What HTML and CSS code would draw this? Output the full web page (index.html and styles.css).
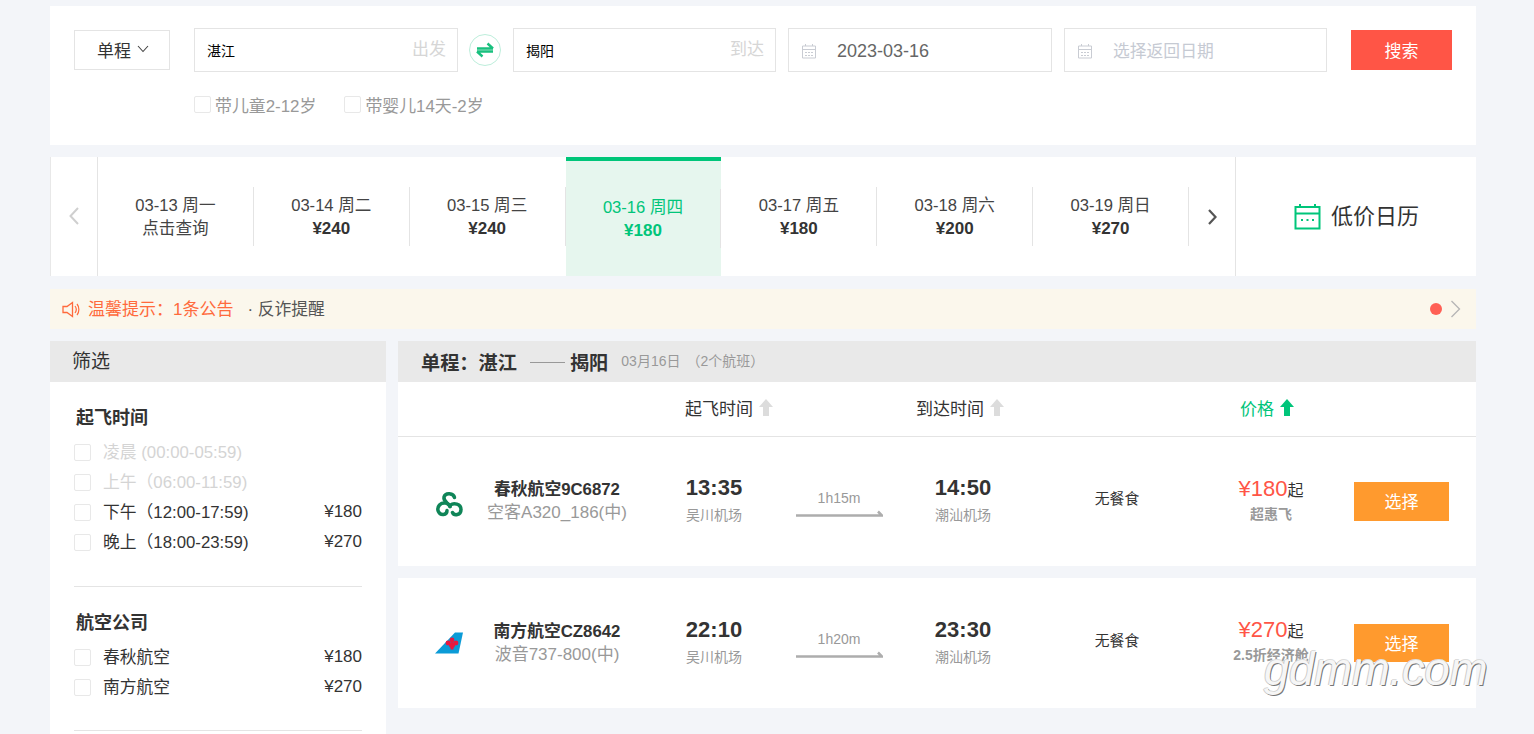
FILE: index.html
```html
<!DOCTYPE html>
<html lang="zh-CN">
<head>
<meta charset="utf-8">
<title>机票查询</title>
<link rel="stylesheet" href="styles.css">
</head>
<body>
<div class="page">
  <section class="search">
    <div class="search-row">
      <div class="trip">单程
        <svg class="trip-caret" width="12" height="8" viewBox="0 0 12 8"><path d="M1 1l5 5.500L11 1" fill="none" stroke="#444" stroke-width="1.100"/></svg>
      </div>
      <div class="field city"><span class="city-name">湛江</span><span class="city-tag">出发</span></div>
      <div class="swap">
        <svg width="20" height="20" viewBox="0 0 20 20"><path d="M2 8.500h16M18 8.500L12.500 3.500M18 11.500H2M2 11.500l5.500 5" fill="none" stroke="#19c07e" stroke-width="2.400"/></svg>
      </div>
      <div class="field city"><span class="city-name">揭阳</span><span class="city-tag">到达</span></div>
      <div class="field date">
        <svg class="cal" width="16" height="16" viewBox="0 0 16 16"><path d="M1.500 3h13v12h-13zM1.500 6.500h13M4.500 1v2M11.500 1v2" fill="none" stroke="#c9ccd3"/><path d="M4 9h2v1H4zM7 9h2v1H7zM10 9h2v1h-2zM4 12h2v1H4zM7 12h2v1H7zM10 12h2v1h-2z" fill="#c9ccd3"/></svg>
        <span class="date-value">2023-03-16</span>
      </div>
      <div class="field date">
        <svg class="cal" width="16" height="16" viewBox="0 0 16 16"><path d="M1.500 3h13v12h-13zM1.500 6.500h13M4.500 1v2M11.500 1v2" fill="none" stroke="#c9ccd3"/><path d="M4 9h2v1H4zM7 9h2v1H7zM10 9h2v1h-2zM4 12h2v1H4zM7 12h2v1H7zM10 12h2v1h-2z" fill="#c9ccd3"/></svg>
        <span class="date-hint">选择返回日期</span>
      </div>
      <button class="search-btn">搜索</button>
    </div>
    <div class="extras">
      <label class="extra"><input type="checkbox" class="box">带儿童2-12岁</label>
      <label class="extra"><input type="checkbox" class="box">带婴儿14天-2岁</label>
    </div>
  </section>

  <nav class="dates">
    <div class="date-nav first">
      <svg width="12" height="20" viewBox="0 0 12 20"><path d="M10 2L2.500 10l7.500 8" fill="none" stroke="#cfcfcf" stroke-width="2"/></svg>
    </div>
    <div class="days">
      <div class="day"><div class="day-inner"><span>03-13 周一</span><span>点击查询</span></div></div>
      <div class="day"><div class="day-inner"><span>03-14 周二</span><b>¥240</b></div></div>
      <div class="day"><div class="day-inner"><span>03-15 周三</span><b>¥240</b></div></div>
      <div class="day active"><div class="day-inner"><span>03-16 周四</span><b>¥180</b></div></div>
      <div class="day"><div class="day-inner"><span>03-17 周五</span><b>¥180</b></div></div>
      <div class="day"><div class="day-inner"><span>03-18 周六</span><b>¥200</b></div></div>
      <div class="day"><div class="day-inner"><span>03-19 周日</span><b>¥270</b></div></div>
    </div>
    <div class="date-nav">
      <svg width="12" height="20" viewBox="0 0 12 20"><path d="M3 3l6.500 7L3 17" fill="none" stroke="#555" stroke-width="2.200"/></svg>
    </div>
    <div class="low-price">
      <svg width="27" height="27" viewBox="0 0 27 27"><path d="M1.500 4h24v21.500h-24zM1.500 10.500h24" fill="none" stroke="#00c57a" stroke-width="2"/><path d="M6 1v4M21 1v4" stroke="#00c57a" stroke-width="2"/><path d="M7 16h2v2H7zM12.500 16h2v2h-2zM18 16h2v2h-2z" fill="#00c57a"/></svg>
      <span>低价日历</span>
    </div>
  </nav>

  <div class="notice">
    <svg width="18" height="17" viewBox="0 0 18 17"><path d="M1 5.500h4L10.500 1.500v14L5 11.500H1z" fill="none" stroke="#ff6a3c" stroke-width="1.300"/><path d="M13 5c1.500 2 1.500 5 0 7M15 3c2.500 3 2.500 8 0 11" fill="none" stroke="#ff6a3c" stroke-width="1.200"/></svg>
    <span class="notice-hot">温馨提示：1条公告</span>
    <span class="notice-text">· 反诈提醒</span>
    <span class="notice-dot"></span>
    <svg width="11" height="18" viewBox="0 0 11 18"><path d="M1.500 1l8 8-8 8" fill="none" stroke="#b5b5b5" stroke-width="1.300"/></svg>
  </div>

  <div class="content">
    <aside class="filter">
      <h2 class="filter-head">筛选</h2>
      <div class="filter-group">
        <h3 class="group-title">起飞时间</h3>
        <div class="opt off"><input type="checkbox" class="box"><span>凌晨 (00:00-05:59)</span></div>
        <div class="opt off"><input type="checkbox" class="box"><span>上午（06:00-11:59)</span></div>
        <div class="opt"><input type="checkbox" class="box"><span>下午（12:00-17:59)</span><em>¥180</em></div>
        <div class="opt"><input type="checkbox" class="box"><span>晚上（18:00-23:59)</span><em>¥270</em></div>
      </div>
      <div class="filter-group airline">
        <h3 class="group-title">航空公司</h3>
        <div class="opt"><input type="checkbox" class="box"><span>春秋航空</span><em>¥180</em></div>
        <div class="opt"><input type="checkbox" class="box"><span>南方航空</span><em>¥270</em></div>
      </div>
    </aside>

    <main class="results">
      <header class="route">
        <strong>单程：湛江</strong><i class="route-line"></i><strong>揭阳</strong>
        <small>03月16日</small><small class="route-count">（2个航班）</small>
      </header>
      <div class="sort">
        <div class="sort-item dep">起飞时间
          <svg width="14" height="17" viewBox="0 0 14 17"><path d="M7 0l7 8H10v9H4V8H0z" fill="#dcdcdc"/></svg>
        </div>
        <div class="sort-item arr">到达时间
          <svg width="14" height="17" viewBox="0 0 14 17"><path d="M7 0l7 8H10v9H4V8H0z" fill="#dcdcdc"/></svg>
        </div>
        <div class="sort-item on">价格
          <svg width="14" height="17" viewBox="0 0 14 17"><path d="M7 0l7 8H10v9H4V8H0z" fill="#00c57a"/></svg>
        </div>
      </div>

      <article class="flight">
        <div class="logo">
          <svg width="28" height="27" viewBox="0 0 28 27"><g fill="none" stroke="#0f8558" stroke-width="3.500" stroke-linecap="round"><path d="M19.500 6.500C18.500 2 10.500 1 9 6c-1 5 5 6 6 9.500"/><path d="M15.500 14c3-2.500 10.500-1.500 10.500 4.500 0 6-7 6.500-8.500 3"/><path d="M15 15.500c-1-4-7.500-4.500-10.500-1.500-3.500 4-1 10 4 9.500 2.500-.2 3.500-1.500 3.500-4"/></g></svg>
        </div>
        <div class="plane"><b>春秋航空9C6872</b><span>空客A320_186(中)</span></div>
        <div class="time"><b>13:35</b><span>吴川机场</span></div>
        <div class="dur"><span>1h15m</span>
          <svg width="87" height="8" viewBox="0 0 87 8"><path d="M0 5.500h86L82 1.500" fill="none" stroke="#adadad" stroke-width="2.500"/></svg>
        </div>
        <div class="time"><b>14:50</b><span>潮汕机场</span></div>
        <div class="meal">无餐食</div>
        <div class="price"><div class="price-main"><b>¥180</b>起</div><span>超惠飞</span></div>
        <div class="pick"><button class="pick-btn">选择</button></div>
      </article>

      <article class="flight second">
        <div class="logo">
          <svg width="28" height="22" viewBox="0 0 28 22"><path d="M0 21.500L20 .5h8l-4.500 21z" fill="#0b9bd7"/><g fill="#e8183f"><circle cx="17" cy="8" r="2.400"/><circle cx="13" cy="11" r="2.400"/><circle cx="21" cy="11" r="2.400"/><circle cx="17" cy="13" r="3"/><rect x="15.500" y="14" width="3" height="3.500"/></g></svg>
        </div>
        <div class="plane"><b>南方航空CZ8642</b><span>波音737-800(中)</span></div>
        <div class="time"><b>22:10</b><span>吴川机场</span></div>
        <div class="dur"><span>1h20m</span>
          <svg width="87" height="8" viewBox="0 0 87 8"><path d="M0 5.500h86L82 1.500" fill="none" stroke="#adadad" stroke-width="2.500"/></svg>
        </div>
        <div class="time"><b>23:30</b><span>潮汕机场</span></div>
        <div class="meal">无餐食</div>
        <div class="price"><div class="price-main"><b>¥270</b>起</div><span>2.5折经济舱</span></div>
        <div class="pick"><button class="pick-btn">选择</button></div>
      </article>
    </main>
  </div>
  <div class="watermark">gdmm.com</div>
</div>
</body>
</html>
```
FILE: styles.css
```css
* { box-sizing: border-box; }
html, body { margin: 0; padding: 0; height: 734px; overflow: hidden; background: #f3f5f9; }
body { font-family: "Liberation Sans", "Noto Sans CJK SC", sans-serif; color: #333; }
.page { position: relative; width: 1426px; height: 734px; margin-left: 50px; padding-top: 6px; display: flex; flex-direction: column; overflow: visible; }
h2, h3 { margin: 0; font-weight: normal; }
button { border: 0; font-family: inherit; cursor: pointer; padding: 0 0 2px; }
em { font-style: normal; }

.box { appearance: none; -webkit-appearance: none; width: 17px; height: 17px; margin: 0; flex: none; background: #fff; border: 1px solid #e8e8e8; border-radius: 2px; }

/* search */
.search { height: 139px; background: #fff; padding: 22px 24px 0; }
.search-row { display: flex; align-items: center; height: 44px; }
.trip { width: 96px; height: 40px; border: 1px solid #e4e4e4; display: flex; align-items: center; justify-content: center; gap: 6px; font-size: 17px; margin-right: 24px; padding: 0 0 2px 2px; }
.field { height: 44px; border: 1px solid #e4e4e4; display: flex; align-items: center; }
.city { width: 264px; padding: 0 11px 0 12px; justify-content: space-between; }
.city-name { font-size: 14px; color: #000; }
.city-tag { font-size: 17px; color: #d6d6d6; margin-top: -6px; }
.swap { width: 32px; height: 32px; margin: 0 12px 0 11px; border: 1px solid #bdeedb; border-radius: 50%; display: flex; align-items: center; justify-content: center; }
.search-row .swap + .city { width: 263px; margin-right: 12px; }
.date { width: 264px; padding-left: 13px; margin-right: 12px; }
.search-row .date + .date { width: 263px; margin-right: 24px; }
.cal { margin: 1px 20px 0 -1px; flex: none; }
.date-value { font-size: 18px; color: #666; margin-top: 2px; }
.date-hint { font-size: 16.800px; color: #c6cad3; }
.search-btn { width: 101px; height: 40px; background: #ff5546; color: #fff; font-size: 17px; }
.extras { display: flex; gap: 28px; margin: 21px 0 0 120px; }
.extra { display: flex; align-items: center; gap: 4px; font-size: 16.900px; color: #999; height: 22px; }

/* date strip */
.dates { display: flex; height: 119px; margin-top: 12px; background: #fff; }
.date-nav { width: 47px; flex: none; display: flex; align-items: center; justify-content: center; border-right: 1px solid #e4e4e4; }
.date-nav.first { width: 48px; border-left: 1px solid #e8e8e8; padding-bottom: 2px; }
.days { flex: none; width: 1091px; display: flex; }
.day { flex: 1; display: flex; align-items: center; position: relative; padding-bottom: 2px; }
.day-inner { flex: 1; height: 59px; border-right: 1px solid #e4e4e4; display: flex; flex-direction: column; align-items: center; justify-content: center; gap: 2px; font-size: 16.600px; color: #444; line-height: 21px; margin-top: 2px; }
.day-inner b { color: #333; font-size: 17px; }
.day.active { background: #e6f6ee; border-top: 4px solid #00c57a; padding-bottom: 2px; }
.day.active .day-inner, .day.active .day-inner b { color: #00c57a; }
.low-price { flex: 1; display: flex; align-items: center; justify-content: center; gap: 10px; font-size: 22px; color: #333; padding: 0 0 1px 1px; }
.low-price span { padding-bottom: 4px; }

/* notice */
.notice { display: flex; align-items: center; height: 40px; margin-top: 13px; padding: 0 15px 0 12px; background: #fbf7ec; font-size: 17px; }
.notice-hot { color: #ff6a3c; margin: 0 0 3px 8px; }
.notice-text { color: #555; margin: 0 0 3px 14px; font-size: 16.800px; }
.notice-dot { width: 12px; height: 12px; border-radius: 50%; background: #ff6055; margin-left: auto; margin-right: 8px; }

/* content */
.content { flex: 1; display: flex; gap: 12px; margin-top: 12px; min-height: 0; }
.filter { width: 336px; flex: none; background: #fff; }
.filter-head { height: 41px; line-height: 42px; padding-left: 22px; background: #e9e9e9; font-size: 19px; color: #333; }
.filter-group { margin: 0 24px; padding: 23px 0 30px; border-bottom: 1px solid #e4e4e4; }
.filter-group.airline { padding: 23px 0 29px; }
.group-title { font-size: 18px; font-weight: bold; line-height: 27px; margin: 0 0 4px 2px; color: #333; }
.opt { display: flex; align-items: center; height: 30px; font-size: 16.800px; color: #333; }
.opt .box { margin: 2px 12px 0 0; }
.opt em { margin: 1px 0 0 auto; font-size: 17px; }
.opt.off { color: #d4d4d4; }

.results { flex: 1; min-width: 0; display: flex; flex-direction: column; align-items: stretch; }
.route { height: 41px; display: flex; align-items: center; padding-left: 23px; background: #e9e9e9; }
.route strong { font-size: 19.200px; color: #333; }
.route-line { width: 35px; height: 1px; background: #999; margin: 2px 5px 0 13px; }
.route small { font-size: 14px; color: #999; margin: -3px 0 0 13px; }
.route small.route-count { margin-left: 6px; }
.sort { height: 55px; display: flex; align-items: center; padding: 0 0 4px 287px; background: #fff; border-bottom: 1px solid #e4e4e4; }
.sort-item { display: flex; align-items: center; gap: 6px; font-size: 17px; color: #333; }
.sort-item.dep { width: 231px; }
.sort-item.arr { width: 324px; }
.sort-item.on { color: #00c57a; }

.flight { height: 129px; display: grid; grid-template-columns: 72px 174px 140px 110px 138px 170px 138px 136px; align-items: center; background: #fff; }
.flight.second { height: 130px; margin-top: 12px; }
.logo { padding-left: 37px; display: flex; margin-top: 5px; }
.second .logo { margin-top: 0; }
.plane, .time, .price, .dur { display: flex; flex-direction: column; align-items: center; white-space: nowrap; }
.plane b { font-size: 16.800px; color: #333; line-height: 22px; }
.plane span { font-size: 17px; color: #999; line-height: 23px; }
.time { margin-top: -1px; }
.time b { font-size: 22px; line-height: 28px; color: #333; }
.time span { font-size: 14px; color: #999; line-height: 25px; margin-top: 1px; }
.dur { font-size: 14px; color: #999; margin-top: 2px; }
.dur span { line-height: 20px; margin-bottom: 2px; }
.meal { font-size: 14.800px; text-align: center; color: #333; margin-top: -8px; }
.price { margin-top: -5px; }
.price-main { font-size: 16px; color: #333; line-height: 28px; display: flex; align-items: baseline; }
.price-main b { font-size: 22px; font-weight: normal; color: #ff5546; }
.price span { font-size: 14px; font-weight: bold; color: #999; line-height: 19px; }
.pick { padding-left: 14px; }
.pick-btn { display: block; width: 95px; height: 39px; background: #ff9a2e; color: #fff; font-size: 17px; }
.second .pick-btn { height: 38px; }

.watermark { position: absolute; left: 1214px; top: 644px; font-size: 45.500px; line-height: 52px; letter-spacing: -.2px; font-style: italic; color: #f6f6f6; text-shadow: 1px 1px 0 #777, -1px 0 0 #ccc, 0 -1px 0 #ddd; }
```
